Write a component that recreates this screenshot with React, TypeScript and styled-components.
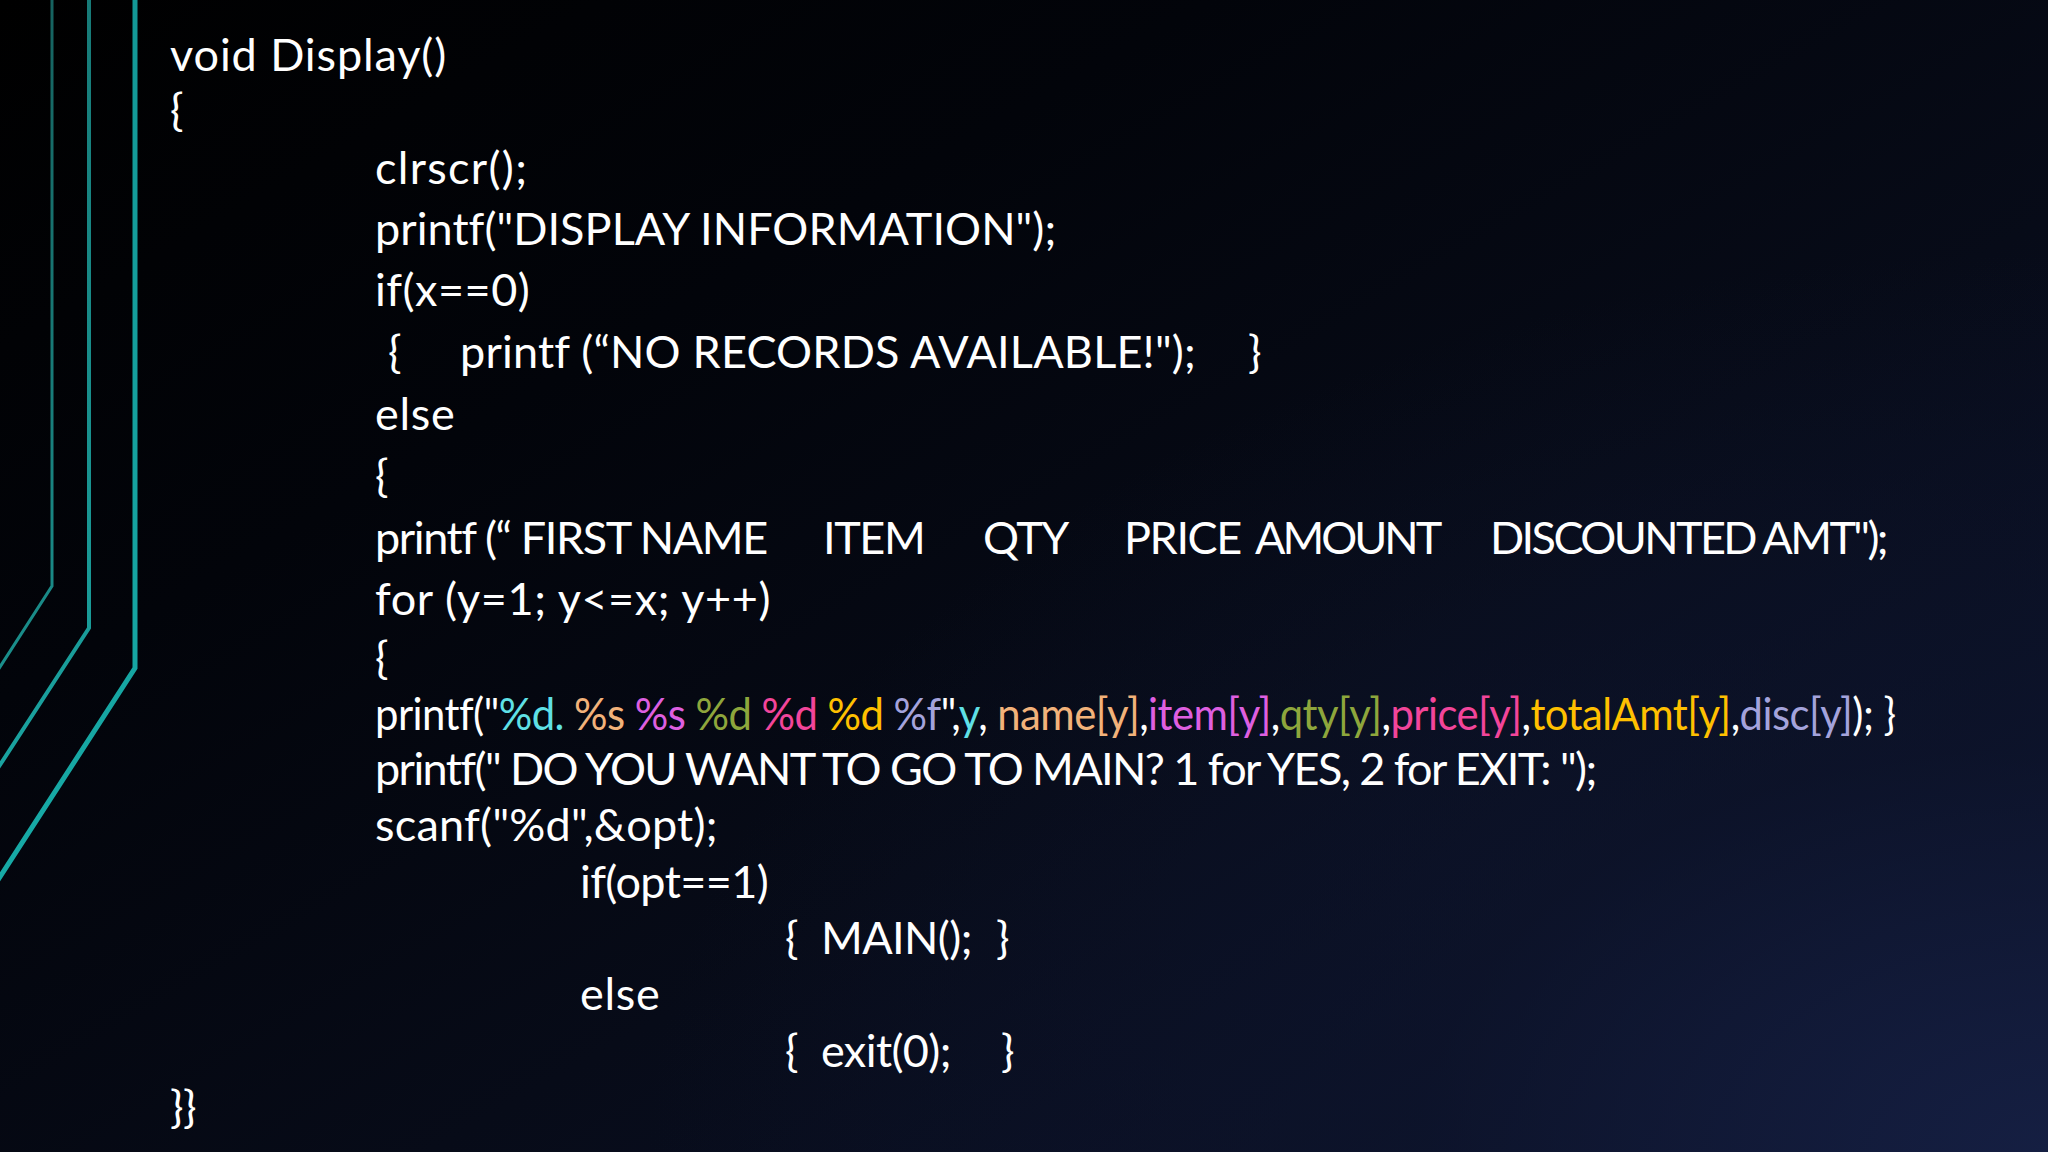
import React from "react";
import styled, { createGlobalStyle } from "styled-components";

const Global = createGlobalStyle`
  html, body { margin: 0; padding: 0; background: #000; }
  #root { width: 2048px; height: 1152px; }
`;

const Slide = styled.div`
  position: relative;
  width: 2048px;
  height: 1152px;
  overflow: hidden;
  background:
    radial-gradient(ellipse 1400px 900px at 100% 100%, rgba(22, 32, 68, 0.9) 0%, rgba(14, 21, 45, 0.6) 45%, rgba(0, 0, 0, 0) 100%),
    linear-gradient(150deg, #000000 0%, #02040a 30%, #070b18 60%, #0d1430 100%);
  font-family: Lato, "Open Sans", sans-serif;
  color: #ffffff;
`;

const Decor = styled.svg`
  position: absolute;
  left: 0;
  top: 0;
  width: 200px;
  height: 1152px;
`;

const Code = styled.div`
  display: flex;
  flex-direction: column;
  padding: 26px 0 0 170px;
  font-size: 45px;
`;

const Line = styled.div<{ $indent: number; $h: number; $ls: number }>`
  display: flex;
  align-items: center;
  height: ${(p) => p.$h}px;
  padding-left: ${(p) => p.$indent * 205}px;
  letter-spacing: ${(p) => p.$ls}px;
  white-space: pre;
`;

const Squeeze = styled.span<{ $k: number }>`
  display: inline-block;
  transform: scaleX(${(p) => p.$k});
  transform-origin: left center;
`;

const Tab = styled.span<{ $w: number; $pad?: number; $ls?: number }>`
  display: inline-block;
  width: ${(p) => p.$w}px;
  padding-left: ${(p) => p.$pad ?? 0}px;
  box-sizing: border-box;
  ${(p) => (p.$ls !== undefined ? `letter-spacing: ${p.$ls}px;` : "")}
`;

const Tight = styled.span<{ $ls: number }>`
  letter-spacing: ${(p) => p.$ls}px;
`;

const Tok = styled.span<{ $c: string }>`
  color: ${(p) => p.$c};
`;

const C = {
  w: "#ffffff",
  cyan: "#5fe0e6",
  peach: "#f2b27a",
  mag: "#de5fe0",
  olive: "#8ea63c",
  pink: "#f2459a",
  gold: "#ffc000",
  lav: "#a4a3dc",
};

const colored: [string, string][] = [
  ['printf("', C.w],
  ["%d.", C.cyan],
  [" ", C.w],
  ["%s", C.peach],
  [" ", C.w],
  ["%s", C.mag],
  [" ", C.w],
  ["%d", C.olive],
  [" ", C.w],
  ["%d", C.pink],
  [" ", C.w],
  ["%d", C.gold],
  [" ", C.w],
  ["%f", C.lav],
  ['",', C.w],
  ["y", C.cyan],
  [", ", C.w],
  ["name[y]", C.peach],
  [",", C.w],
  ["item[y]", C.mag],
  [",", C.w],
  ["qty[y]", C.olive],
  [",", C.w],
  ["price[y]", C.pink],
  [",", C.w],
  ["totalAmt[y]", C.gold],
  [",", C.w],
  ["disc[y]", C.lav],
  ["); }", C.w],
];

const hs = [56, 54, 62, 60, 62, 62, 61, 63, 61, 62, 56, 55, 55, 58, 56, 56, 56, 57, 56];

const rows: { indent: number; ls: number; body: React.ReactNode }[] = [
  { indent: 0, ls: 0.9, body: "void Display()" },
  { indent: 0, ls: 0, body: "{" },
  { indent: 1, ls: 1.3, body: "clrscr();" },
  { indent: 1, ls: 0.05, body: 'printf("DISPLAY INFORMATION");' },
  { indent: 1, ls: 0.5, body: "if(x==0)" },
  {
    indent: 1,
    ls: 0.2,
    body: (
      <>
        <Tab $w={85} $pad={13}>{"{"}</Tab>
        <Tab $w={788}>{"printf (“NO RECORDS AVAILABLE!\");"}</Tab>
        {"}"}
      </>
    ),
  },
  { indent: 1, ls: 0.7, body: "else" },
  { indent: 1, ls: 0, body: "{" },
  {
    indent: 1,
    ls: -1.4,
    body: (
      <>
        <Tab $w={448}>{"printf (“ FIRST NAME"}</Tab>
        <Tab $w={160}>ITEM</Tab>
        <Tab $w={141}>QTY</Tab>
        <Tab $w={131}>PRICE</Tab>
        <Tab $w={235} $ls={-3}>AMOUNT</Tab>
        <Tight $ls={-2.6}>{'DISCOUNTED AMT");'}</Tight>
      </>
    ),
  },
  { indent: 1, ls: 0.6, body: "for (y=1; y<=x; y++)" },
  { indent: 1, ls: 0, body: "{" },
  {
    indent: 1,
    ls: -0.6,
    body: (
      <Squeeze $k={0.93}>
        {colored.map(([t, c], i) => (
          <Tok key={i} $c={c}>
            {t}
          </Tok>
        ))}
      </Squeeze>
    ),
  },
  { indent: 1, ls: -1.6, body: 'printf(" DO YOU WANT TO GO TO MAIN? 1 for YES, 2 for EXIT: ");' },
  { indent: 1, ls: 0.25, body: 'scanf("%d",&opt);' },
  { indent: 2, ls: -0.6, body: "if(opt==1)" },
  {
    indent: 3,
    ls: -0.6,
    body: (
      <>
        <Tab $w={36}>{"{"}</Tab>
        <Tab $w={175}>MAIN();</Tab>
        {"}"}
      </>
    ),
  },
  { indent: 2, ls: 0.7, body: "else" },
  {
    indent: 3,
    ls: -0.6,
    body: (
      <>
        <Tab $w={36}>{"{"}</Tab>
        <Tab $w={180}>exit(0);</Tab>
        {"}"}
      </>
    ),
  },
  { indent: 0, ls: -0.6, body: "}}" },
];

export default function App() {
  return (
    <>
      <Global />
      <Slide>
        <Decor viewBox="0 0 200 1152">
          <defs>
            <linearGradient id="g1" x1="0" y1="0" x2="0" y2="1">
              <stop offset="0" stopColor="#16625f" />
              <stop offset="1" stopColor="#1a8f8c" />
            </linearGradient>
            <linearGradient id="g2" x1="0" y1="0" x2="0" y2="1">
              <stop offset="0" stopColor="#177a77" />
              <stop offset="1" stopColor="#1aa3a0" />
            </linearGradient>
            <linearGradient id="g3" x1="0" y1="0" x2="0" y2="1">
              <stop offset="0" stopColor="#139896" />
              <stop offset="1" stopColor="#17aaa6" />
            </linearGradient>
          </defs>
          <path d="M52 -5 V586 L-2 670" fill="none" stroke="url(#g1)" strokeWidth="3" />
          <path d="M89 -5 V628 L-2 768" fill="none" stroke="url(#g2)" strokeWidth="4" />
          <path d="M135 -5 V668 L-2 880" fill="none" stroke="url(#g3)" strokeWidth="5" />
        </Decor>
        <Code>
          {rows.map((r, i) => (
            <Line key={i} $indent={r.indent} $h={hs[i]} $ls={r.ls}>
              {r.body}
            </Line>
          ))}
        </Code>
      </Slide>
    </>
  );
}
